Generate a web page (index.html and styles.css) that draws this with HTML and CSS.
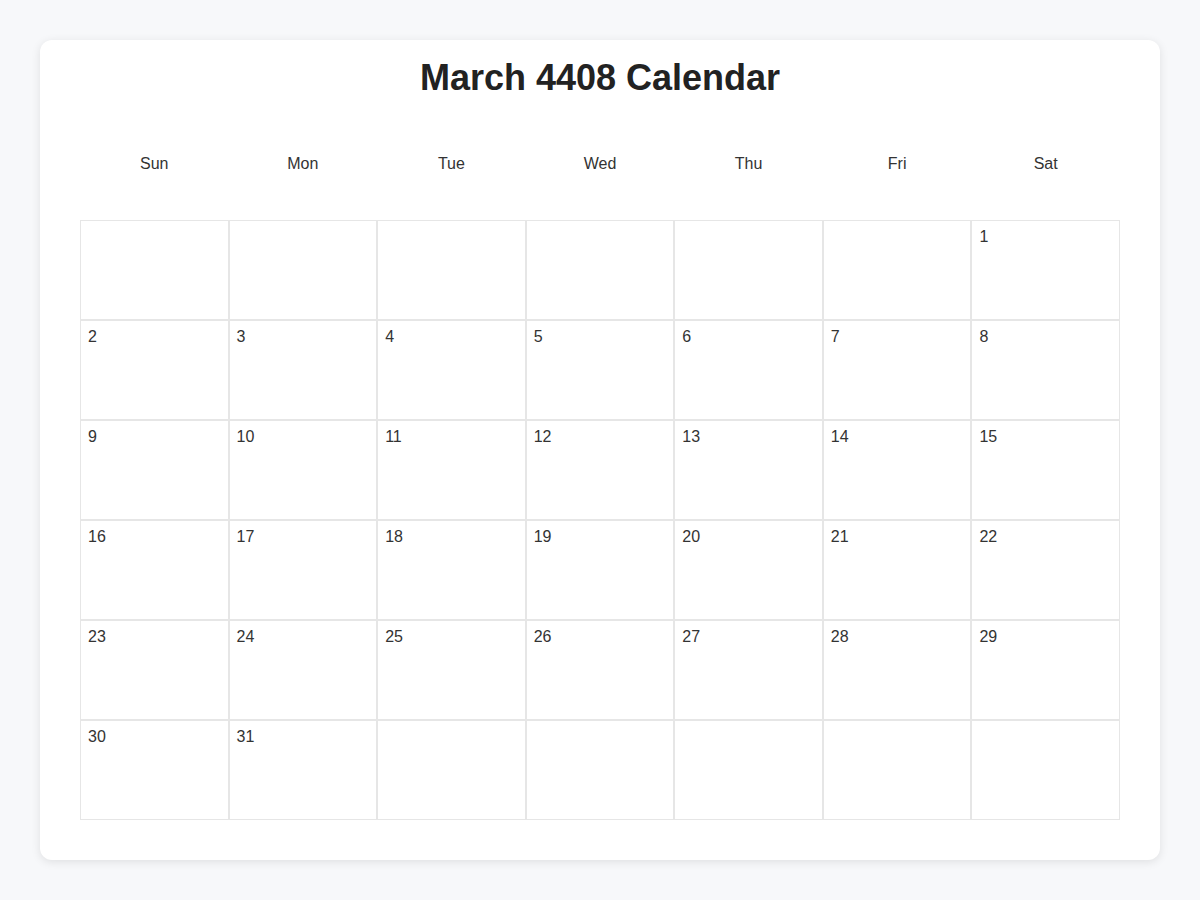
FILE: index.html
```html
<!DOCTYPE html>
<html>
<head>
<meta charset="utf-8">
<link rel="stylesheet" href="styles.css">
</head>
<body>
<div class="card">
  <h1 class="title">March 4408 Calendar</h1>
  <div class="weekdays">
    <div class="wd">Sun</div><div class="wd">Mon</div><div class="wd">Tue</div><div class="wd">Wed</div><div class="wd">Thu</div><div class="wd">Fri</div><div class="wd">Sat</div>
  </div>
  <div class="days">
    <div class="day"></div><div class="day"></div><div class="day"></div><div class="day"></div><div class="day"></div><div class="day"></div><div class="day">1</div>
    <div class="day">2</div><div class="day">3</div><div class="day">4</div><div class="day">5</div><div class="day">6</div><div class="day">7</div><div class="day">8</div>
    <div class="day">9</div><div class="day">10</div><div class="day">11</div><div class="day">12</div><div class="day">13</div><div class="day">14</div><div class="day">15</div>
    <div class="day">16</div><div class="day">17</div><div class="day">18</div><div class="day">19</div><div class="day">20</div><div class="day">21</div><div class="day">22</div>
    <div class="day">23</div><div class="day">24</div><div class="day">25</div><div class="day">26</div><div class="day">27</div><div class="day">28</div><div class="day">29</div>
    <div class="day">30</div><div class="day">31</div><div class="day"></div><div class="day"></div><div class="day"></div><div class="day"></div><div class="day"></div>
  </div>
</div>
</body>
</html>
```
FILE: styles.css
```css
html, body {
  margin: 0;
  padding: 0;
}
body {
  background: #f7f8fa;
  font-family: "Liberation Sans", Arial, sans-serif;
  color: #333;
  padding: 40px;
}
.card {
  background: #fff;
  border-radius: 12px;
  box-shadow: 0 2px 10px rgba(0, 0, 0, 0.1);
  padding: 17px 40px 40px;
}
.title {
  margin: 0 0 36px;
  text-align: center;
  font-size: 36px;
  line-height: 41px;
  font-weight: bold;
  color: #222;
}
.weekdays {
  display: grid;
  grid-template-columns: repeat(7, 1fr);
  margin-bottom: 28px;
}
.wd {
  text-align: center;
  font-size: 16px;
  line-height: 18px;
  padding: 21px 0 19px;
  color: #333;
}
.days {
  display: grid;
  grid-template-columns: repeat(7, 1fr);
}
.day {
  height: 100px;
  box-sizing: border-box;
  border: 1px solid #e6e6e6;
  padding: 7px 7px;
  font-size: 16px;
  line-height: 18px;
  color: #333;
}
```
